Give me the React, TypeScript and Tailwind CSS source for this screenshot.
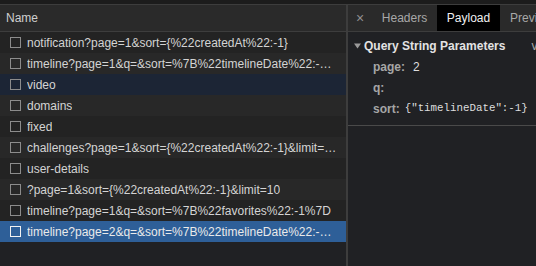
import React from "react";

const rows: { name: string; kind: "odd" | "even" | "hover" | "sel" }[] = [
  { name: "notification?page=1&sort={%22createdAt%22:-1}", kind: "odd" },
  { name: "timeline?page=1&q=&sort=%7B%22timelineDate%22:-…", kind: "even" },
  { name: "video", kind: "hover" },
  { name: "domains", kind: "even" },
  { name: "fixed", kind: "odd" },
  { name: "challenges?page=1&sort={%22createdAt%22:-1}&limit=…", kind: "even" },
  { name: "user-details", kind: "odd" },
  { name: "?page=1&sort={%22createdAt%22:-1}&limit=10", kind: "even" },
  { name: "timeline?page=1&q=&sort=%7B%22favorites%22:-1%7D", kind: "odd" },
  { name: "timeline?page=2&q=&sort=%7B%22timelineDate%22:-…", kind: "sel" },
];

function Row({ name, kind }: { name: string; kind: string }) {
  const bg =
    kind === "sel"
      ? "bg-[#2e5f98]"
      : kind === "hover"
      ? "bg-[#1c2535]"
      : kind === "even"
      ? "bg-[#282828]"
      : "bg-[#232323]";
  return (
    <div className={`h-[21px] flex items-center pl-[10px] pr-[8px] ${bg}`}>
      <div
        className={`w-[11px] h-[11px] shrink-0 border ${
          kind === "sel" ? "border-[#f2f2f2]" : "border-[#8c8c8c]"
        }`}
      />
      <div
        className={`ml-[6px] whitespace-nowrap overflow-hidden text-ellipsis ${
          kind === "sel" ? "text-[#eaeaea]" : "text-[#d4d4d4]"
        }`}
      >
        {name}
      </div>
    </div>
  );
}

export default function App() {
  return (
    <div className="w-[536px] h-[266px] overflow-hidden bg-[#202124] flex flex-col font-['Liberation_Sans',Arial,sans-serif] text-[12px]">
      <div className="h-[4px] shrink-0 bg-[#1c1c1c]" />
      <div className="flex flex-1 min-h-0">
        {/* Left pane */}
        <div className="w-[346px] shrink-0 flex flex-col bg-[#202124]">
          <div className="h-[28px] shrink-0 flex items-center pl-[6px] bg-[#2a2a2a] border-t border-b border-[#3d3d3d] text-[#cfcfcf]">
            Name
          </div>
          {rows.map((r, i) => (
            <Row key={i} name={r.name} kind={r.kind} />
          ))}
        </div>
        <div className="w-[2px] shrink-0 bg-[#3d3d3d]" />
        {/* Right pane */}
        <div className="flex-1 min-w-0 flex flex-col bg-[#202124] overflow-hidden">
          <div className="h-[28px] shrink-0 flex items-stretch bg-[#2a2a2a] border-t border-b border-[#3d3d3d] whitespace-nowrap overflow-hidden">
            <div className="w-[24px] shrink-0 flex items-center justify-center text-[#8f8f8f] text-[14px]">
              ×
            </div>
            <div className="w-[65px] shrink-0 flex items-center justify-center text-[#a8a8a8]">
              Headers
            </div>
            <div className="w-[63px] shrink-0 flex items-center justify-center bg-black text-[#f0f0f0]">
              Payload
            </div>
            <div className="flex items-center pl-[10px] text-[#a8a8a8]">Preview</div>
          </div>
          <div className="mt-[4px] h-[20px] flex items-center pl-[6px] whitespace-nowrap overflow-hidden">
            <svg width="7" height="6" viewBox="0 0 7 6" className="shrink-0">
              <path d="M0 0.5 L7 0.5 L3.5 5.5 Z" fill="#9a9a9a" />
            </svg>
            <span className="ml-[3px] font-bold text-[#e3e3e3]">Query String Parameters</span>
            <span className="ml-[26px] text-[#a8a8a8]">view source</span>
          </div>
          <div className="h-[21px] flex items-center pl-[25px] whitespace-nowrap">
            <span className="font-bold text-[#a6a6a6]">page:</span>
            <span className="ml-[8px] text-[#dedede]">2</span>
          </div>
          <div className="h-[21px] flex items-center pl-[25px] whitespace-nowrap">
            <span className="font-bold text-[#a6a6a6]">q:</span>
          </div>
          <div className="h-[21px] flex items-center pl-[25px] whitespace-nowrap">
            <span className="font-bold text-[#a6a6a6]">sort:</span>
            <span className="ml-[5px] font-['Liberation_Mono',monospace] text-[10.8px] text-[#dedede]">
              {'{"timelineDate":-1}'}
            </span>
          </div>
          <div className="mt-[6px] border-b border-[#4a4a4a]" />
        </div>
      </div>
    </div>
  );
}
